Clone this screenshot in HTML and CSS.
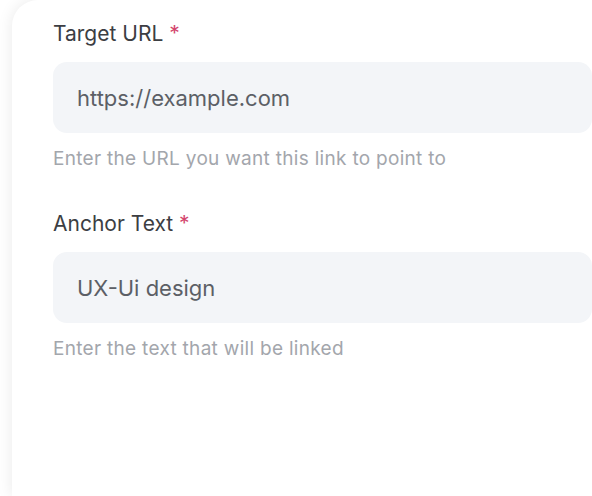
FILE: index.html
```html
<!DOCTYPE html>
<html lang="en">
<head>
    <meta charset="UTF-8">
    <meta name="viewport" content="width=device-width, initial-scale=1.0">
    <title>Edit Link</title>
    <link rel="stylesheet" href="styles.css">
</head>
<body>
    <div class="card">
        <form class="link-form">
            <div class="field">
                <label for="targetUrl">Target URL <span class="required">*</span></label>
                <input type="text" id="targetUrl" name="targetUrl" value="https://example.com">
                <p class="hint">Enter the URL you want this link to point to</p>
            </div>

            <div class="field">
                <label for="anchorText">Anchor Text <span class="required">*</span></label>
                <input type="text" id="anchorText" name="anchorText" value="UX-Ui design">
                <p class="hint">Enter the text that will be linked</p>
            </div>
        </form>
    </div>
</body>
</html>
```

FILE: styles.css
```css
html, body {
    height: 100%;
}

body {
    margin: 0;
    background-color: #ffffff;
    font-family: Inter, "Noto Sans", sans-serif;
    overflow: hidden;
}

.card {
    box-sizing: border-box;
    margin-left: 12px;
    height: 100%;
    background-color: #ffffff;
    border-top-left-radius: 26px;
    box-shadow: 0 0 16px rgba(0, 0, 0, 0.09);
    padding: 21px 0 0 41px;
}

.link-form {
    display: flex;
    flex-direction: column;
    gap: 40px;
}

.field label {
    display: block;
    font-size: 21px;
    line-height: 26px;
    color: #3c3e43;
    margin-bottom: 15px;
}

.required {
    color: #d3456d;
}

.field input {
    display: block;
    box-sizing: border-box;
    width: 100%;
    height: 71px;
    border: none;
    border-radius: 14px;
    background-color: #f3f5f8;
    padding: 0 24px;
    font-family: inherit;
    font-size: 22px;
    color: #5c5f66;
    outline: none;
}

.hint {
    margin: 14px 0 0;
    font-size: 19px;
    line-height: 24px;
    letter-spacing: 0.3px;
    color: #a3a6ac;
}
```
